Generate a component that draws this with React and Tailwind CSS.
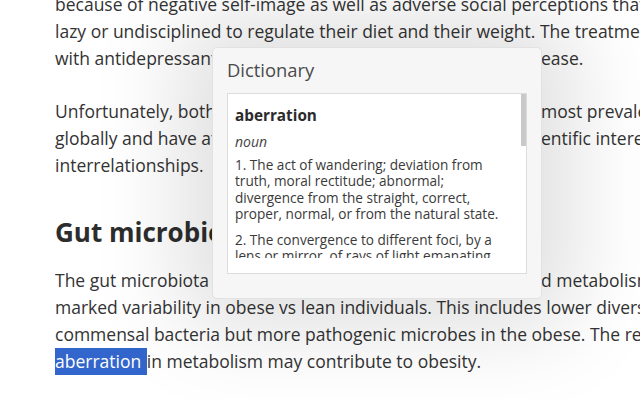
import React from 'react';

const font = { fontFamily: '"Open Sans", "Noto Sans", sans-serif' };

// a plain body line
const Line = ({ children }) => (
  <div className="h-[27px] leading-[27px] whitespace-nowrap">{children}</div>
);

// a line whose middle sits under the popup: left part clipped at the popup's edge
const SplitLine = ({ left, right }) => (
  <div className="flex h-[27px] leading-[27px] whitespace-nowrap">
    <span className="w-[486px] shrink-0 overflow-hidden">{left}</span>
    <span>{right}</span>
  </div>
);

const DictionaryPopup = () => (
  <div className="absolute left-[212px] top-[47px] w-[330px] h-[252px] rounded-[5px] border border-[#e2e2e2] bg-[#f6f6f6] shadow-[0_0_90px_30px_rgba(0,0,0,0.13)] px-[14px]">
    <div className="h-[45px] pt-[9px] text-[18.4px] leading-[26px] text-[#4a4a4a]">Dictionary</div>
    <div className="relative h-[181px] border border-[#dcdcdc] bg-white">
      <div className="absolute right-0 top-0 w-[5px] h-[52px] bg-[#c9c9c9]" />
      <div className="h-[164px] overflow-hidden pl-[7px] pr-[14px] pt-[9px] text-[#333]">
        <div className="text-[15.3px] leading-[24px] font-bold text-[#2b2b2b]">aberration</div>
        <div className="mt-[4px] text-[14px] leading-[22px] italic text-[#444]">noun</div>
        <div className="mt-[4px] text-[13.6px] leading-[16.4px] text-[#3a3a3a]">
          1. The act of wandering; deviation from truth, moral rectitude; abnormal; divergence from the straight, correct, proper, normal, or from the natural state.
        </div>
        <div className="mt-[9px] text-[13.6px] leading-[16.4px] text-[#3a3a3a]">
          2. The convergence to different foci, by a lens or mirror, of rays of light emanating from one and the same point.
        </div>
      </div>
    </div>
  </div>
);

export default function App() {
  return (
    <div className="relative w-[640px] h-[400px] overflow-hidden bg-white" style={font}>
      <div className="pl-[55px] mt-[-9px] text-[17.5px] text-[#333]">
        <div>
          <Line>because of negative self-image as well as adverse social perceptions that they are</Line>
          <Line>lazy or undisciplined to regulate their diet and their weight. The treatment</Line>
          <SplitLine left="with antidepressants may also aggravate the dis" right="ease." />
        </div>
        <div className="mt-[26px]">
          <SplitLine left="Unfortunately, both obesity and depression are among the" right="most prevalent disorders" />
          <SplitLine left="globally and have attracted considerable sci" right="entific interest in their" />
          <Line>interrelationships.</Line>
        </div>
        <h2 className="mt-[35px] h-[36px] leading-[36px] text-[26px] font-bold text-[#2d2d2d] whitespace-nowrap">
          Gut microbiota and obesity
        </h2>
        <div className="mt-[17px]">
          <SplitLine left="The gut microbiota is implicated in energy balance an" right="d metabolism and shows" />
          <Line>marked variability in obese vs lean individuals. This includes lower diversity</Line>
          <Line>commensal bacteria but more pathogenic microbes in the obese. The resulting</Line>
          <Line>
            <span className="inline-block h-[27px] pr-[1px] bg-[#3366cc] text-white">aberration&nbsp;</span>in metabolism may contribute to obesity.
          </Line>
        </div>
      </div>
      <DictionaryPopup />
    </div>
  );
}
